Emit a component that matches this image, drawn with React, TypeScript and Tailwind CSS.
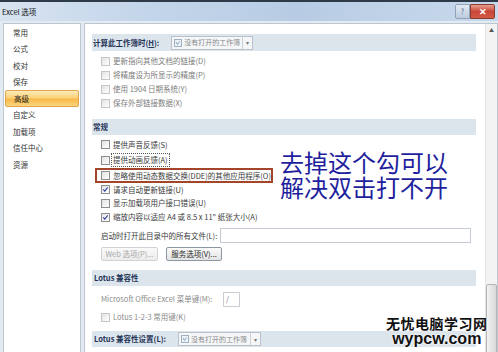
import React from 'react'

const navItems = ['常用', '公式', '校对', '保存', '高级', '自定义', '加载项', '信任中心', '资源']

function Box({ checked = false, dim = false }: { checked?: boolean; dim?: boolean }) {
  return (
    <span
      className={`flex h-[9px] w-[9px] shrink-0 items-center justify-center border ${
        dim ? 'border-[#c6c6c6]' : 'border-[#8e8e8e]'
      } bg-[linear-gradient(135deg,#e2e2e2,#ffffff)]`}
    >
      {checked && (
        <svg viewBox="0 0 9 9" className="h-[9px] w-[9px]">
          <path d="M1.6 4.4 L3.6 6.6 L7.4 1.8" fill="none" stroke="#26409a" strokeWidth="1.3" />
        </svg>
      )}
    </span>
  )
}

function Dropdown({ width }: { width: string }) {
  return (
    <div className={`flex h-[14px] items-stretch border border-[#b9c2cc] bg-[#f4f6f8] ${width}`}>
      <div className="flex flex-1 items-center gap-[2px] whitespace-nowrap pl-[2px] text-[7px] font-normal text-[#8a8a8a]">
        <svg viewBox="0 0 8 8" className="h-[8px] w-[8px] shrink-0">
          <rect x="0.5" y="0.5" width="7" height="7" fill="#eef3f8" stroke="#9fb0c2" />
          <path d="M2 3 L3.5 5.5 L5.5 2.5" fill="none" stroke="#6f8fb0" strokeWidth="0.8" />
        </svg>
        <span>没有打开的工作簿</span>
      </div>
      <div className="flex w-[10px] shrink-0 items-center justify-center border-l border-[#c9d0d8] text-[6px] text-[#777]">▾</div>
    </div>
  )
}

export default function App() {
  return (
    <div className="relative h-[352px] w-[498px] overflow-hidden bg-[#e3eaf2] font-['Noto_Sans_CJK_SC',sans-serif] text-[#333]">
      {/* title bar */}
      <div className="flex h-[21px] items-center justify-between border-t-2 border-[#2e3a48] bg-[linear-gradient(to_right,#d7e3f0,#c3d5ea_30%,#b7cce4_60%,#c9d9ec)] pl-[2px] pr-[3px]">
        <span className="text-[7.5px] text-[#111]">Excel 选项</span>
        <div className="flex h-[15px] items-stretch">
          <div className="flex w-[15px] items-center justify-center rounded-l-[2px] border border-[#8fa3bb] bg-[linear-gradient(to_bottom,#e4ebf4,#bccbdd)] text-[7px] text-[#506580]">?</div>
          <div className="flex w-[25px] items-center justify-center rounded-r-[2px] border border-[#8a3a30] bg-[linear-gradient(to_bottom,#e8a08f,#c9463a_50%,#d35a44)] text-[9px] font-bold text-white">
            ✕
          </div>
        </div>
      </div>

      <div className="flex gap-[3px] pl-[3px] pt-[2px]">
        {/* left nav */}
        <div className="h-[340px] w-[78px] border border-[#bcc6d1] bg-white px-[1px]">
          {navItems.map((n) => (
            <div
              key={n}
              className={`flex h-[16.5px] items-center pl-[8px] text-[7.5px] ${
                n === '高级'
                  ? 'rounded-[2px] border border-[#e2a44a] bg-[linear-gradient(to_bottom,#fdebb9,#fbd27a_45%,#f8b94a_55%,#fbd67e)] text-[#222]'
                  : 'text-[#333]'
              }`}
            >
              {n}
            </div>
          ))}
        </div>

        {/* right panel */}
        <div className="flex h-[340px] flex-1 border border-[#bcc6d1] bg-white">
          <div className="flex-1 pl-[7px] pr-[9px] pt-[10px] text-[7.5px]">
            <div className="flex h-[17px] items-center gap-[12px] bg-[#dde5ec] pl-[1px]">
              <span className="font-bold text-[#1d3458]">计算此工作簿时(<u>H</u>):</span>
              <Dropdown width="w-[82px]" />
            </div>

            <div className="mt-[3px] text-[#7c7c7c]">
              {['更新指向其他文档的链接(D)', '将精度设为所显示的精度(P)', '使用 1904 日期系统(Y)', '保存外部链接数据(X)'].map((t) => (
                <div key={t} className="flex h-[14px] items-center gap-[3px] pl-[9px]">
                  <Box dim />
                  <span>{t}</span>
                </div>
              ))}
            </div>

            <div className="mt-[9px] flex h-[16px] items-center bg-[#dde5ec] pl-[1px] font-bold text-[#1d3458]">常规</div>

            <div className="mt-[2px] text-[#3a3a3a]">
              <div className="flex h-[15px] items-center gap-[3px] pl-[9px]">
                <Box />
                <span>提供声音反馈(S)</span>
              </div>
              <div className="flex h-[16px] items-center gap-[2px] pl-[9px]">
                <Box />
                <span className="px-[1px] outline outline-1 outline-dotted outline-[#555]">提供动画反馈(A)</span>
              </div>
              <div className="ml-[3px] flex h-[15px] w-[178px] items-center gap-[3px] whitespace-nowrap border-2 border-[#a3452b] pl-[4px]">
                <Box />
                <span>忽略使用动态数据交换(DDE)的其他应用程序(O)</span>
              </div>
              <div className="flex h-[13px] items-center gap-[3px] pl-[9px]">
                <Box checked />
                <span>请求自动更新链接(U)</span>
              </div>
              <div className="flex h-[14px] items-center gap-[3px] pl-[9px]">
                <Box />
                <span>显示加载项用户接口错误(U)</span>
              </div>
              <div className="flex h-[14px] items-center gap-[3px] pl-[9px]">
                <Box checked />
                <span>缩放内容以适应 A4 或 8.5 x 11" 纸张大小(A)</span>
              </div>
            </div>

            <div className="mt-[3px] flex h-[17px] items-center pl-[9px] text-[#3a3a3a]">
              <span className="w-[119px]">启动时打开此目录中的所有文件(L):</span>
              <div className="h-[15px] w-[251px] border border-[#c5cbd2] bg-white" />
            </div>

            <div className="mt-[3px] flex h-[14px] gap-[8px] pl-[9px]">
              <div className="flex w-[57px] items-center justify-center rounded-[2px] border border-[#cfd3d8] bg-[linear-gradient(to_bottom,#fafafa,#ececec)] text-[#a8a8a8]">
                Web 选项(P)...
              </div>
              <div className="flex w-[56px] items-center justify-center rounded-[2px] border border-[#8c97a3] bg-[linear-gradient(to_bottom,#fbfbfb,#e3e3e3)] text-[#2a2a2a]">
                服务选项(V)...
              </div>
            </div>

            <div className="mt-[9px] flex h-[16px] items-center bg-[#dde5ec] pl-[2px] font-bold text-[#1d3458]">Lotus 兼容性</div>

            <div className="mt-[5px] flex h-[16px] items-center pl-[9px] text-[#8a8a8a]">
              <span className="w-[122px]">Microsoft Office Excel 菜单键(M):</span>
              <div className="flex h-[15px] w-[17px] items-center border border-[#c9ced4] pl-[2px] text-[#777]">/</div>
            </div>
            <div className="mt-[3px] flex h-[14px] items-center gap-[3px] pl-[9px] text-[#8a8a8a]">
              <Box dim />
              <span>Lotus 1-2-3 常用键(K)</span>
            </div>

            <div className="mt-[7px] flex h-[16px] items-center gap-[12px] bg-[#dde5ec] pl-[2px]">
              <span className="font-bold text-[#1d3458]">Lotus 兼容性设置(L):</span>
              <Dropdown width="w-[83px]" />
            </div>
          </div>

          {/* scrollbar */}
          <div className="flex w-[12px] flex-col border-l border-[#e4e4e4] bg-[#f3f3f3]">
            <div className="flex h-[12px] items-center justify-center text-[5px] text-[#555]">▲</div>
            <div className="flex-1" />
            <div className="h-[78px] rounded-[2px] border border-[#b5b5b5] bg-[linear-gradient(to_right,#f2f2f2,#d9d9d9)]" />
          </div>
        </div>
      </div>

      {/* annotation over the screenshot */}
      <div className="absolute left-[280px] top-[149px] text-[24px] leading-[25px] text-[#1f1f9e]">
        <div>去掉这个勾可以</div>
        <div>解决双击打不开</div>
      </div>

      {/* watermark */}
      <div className="absolute left-[386px] top-[315px] flex flex-col items-center [text-shadow:0_0_2px_#fff,0_0_2px_#fff]">
        <div className="text-[14px] font-bold leading-[16px] tracking-[0.5px] text-[#111]">无忧电脑学习网</div>
        <div className="font-['Liberation_Sans',sans-serif] text-[16px] font-bold leading-[16px] text-[#111]">wypcw.com</div>
      </div>
    </div>
  )
}
